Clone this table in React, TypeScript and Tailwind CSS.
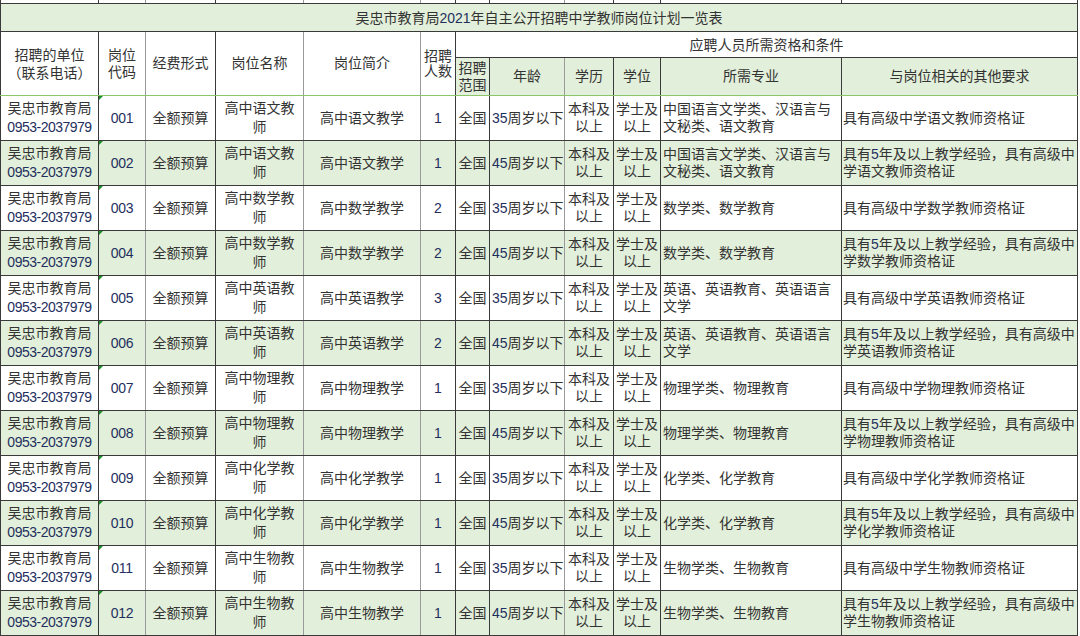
import React from 'react';

const D = 'd';
const G = 'g';
// boundary colours for 13 vertical lines (12 columns)
const bounds = [D, D, G, D, G, G, D, D, G, D, D, D, D];
const widths = [98, 47, 70, 88, 117, 35, 34, 75, 49, 47, 181, 236];

const leftCls = (c: string) => (c === D ? 'border-l-[#3a3a3a]' : 'border-l-[#9a9a9a]');
const rightCls = (c: string) => (c === D ? 'border-r-[#3a3a3a]' : 'border-r-[#9a9a9a]');

type CellProps = {
  col: number;
  span?: number;
  rowSpan?: number;
  top?: string;
  bottom?: string;
  className?: string;
  children?: React.ReactNode;
};

function Cell({ col, span = 1, rowSpan, top = 'border-t-[#3a3a3a]', bottom = 'border-b-[#3a3a3a]', className = '', children }: CellProps) {
  return (
    <td
      colSpan={span}
      rowSpan={rowSpan}
      className={[
        'border border-solid p-0 align-middle',
        leftCls(bounds[col]),
        rightCls(bounds[col + span]),
        top,
        bottom,
        className,
      ].join(' ')}
    >
      {children}
    </td>
  );
}

const N = ({ children }: { children: React.ReactNode }) => <span className="text-[#1f2f5e]">{children}</span>;

const subjects = [
  { s: '语文', major: ['中国语言文学类、汉语言与', '文秘类、语文教育'] },
  { s: '数学', major: ['数学类、数学教育'] },
  { s: '英语', major: ['英语、英语教育、英语语言', '文学'] },
  { s: '物理', major: ['物理学类、物理教育'] },
  { s: '化学', major: ['化学类、化学教育'] },
  { s: '生物', major: ['生物学类、生物教育'] },
];
const nums = ['1', '1', '2', '2', '3', '2', '1', '1', '1', '1', '1', '1'];

const rows = nums.map((num, i) => {
  const sub = subjects[Math.floor(i / 2)];
  const green = i % 2 === 1;
  return {
    code: String(i + 1).padStart(3, '0'),
    sub: sub.s,
    major: sub.major,
    num,
    green,
  };
});

export default function App() {
  return (
    <div className="w-[1080px] h-[636px] overflow-hidden bg-white text-[14px] text-[#333333] font-['Liberation_Sans','Noto_Sans_CJK_SC',sans-serif]">
      <table className="table-fixed border-collapse w-[1077px]">
        <colgroup>
          {widths.map((w, i) => (
            <col key={i} style={{ width: w }} />
          ))}
        </colgroup>
        <tbody>
          {/* sliver of the row above */}
          <tr className="h-[3px]">
            {widths.map((_, i) => (
              <Cell key={i} col={i} top="border-t-transparent" className="h-[3px] leading-[0px]" />
            ))}
          </tr>
          {/* title */}
          <tr>
            <Cell col={0} span={12} className="h-[28px] bg-[#e2efda] text-center leading-[20px]">
              吴忠市教育局<N>2021</N>年自主公开招聘中学教师岗位计划一览表
            </Cell>
          </tr>
          {/* header row A */}
          <tr>
            <Cell col={0} rowSpan={2} bottom="border-b-[#8cc46a]" className="text-center leading-[18px]">
              招聘的单位
              <br />
              （联系电话）
            </Cell>
            <Cell col={1} rowSpan={2} bottom="border-b-[#8cc46a]" className="text-center leading-[17px]">
              岗位
              <br />
              代码
            </Cell>
            <Cell col={2} rowSpan={2} bottom="border-b-[#8cc46a]" className="text-center">
              经费形式
            </Cell>
            <Cell col={3} rowSpan={2} bottom="border-b-[#8cc46a]" className="text-center">
              岗位名称
            </Cell>
            <Cell col={4} rowSpan={2} bottom="border-b-[#8cc46a]" className="text-center">
              岗位简介
            </Cell>
            <Cell col={5} rowSpan={2} bottom="border-b-[#8cc46a]" className="text-center leading-[15px]">
              招聘
              <br />
              人数
            </Cell>
            <Cell col={6} span={6} className="h-[26px] text-center leading-[18px]">
              应聘人员所需资格和条件
            </Cell>
          </tr>
          {/* header row B */}
          <tr>
            <Cell col={6} bottom="border-b-[#8cc46a]" className="h-[38px] bg-[#e2efda] text-center leading-[17px]">
              招聘
              <br />
              范围
            </Cell>
            <Cell col={7} bottom="border-b-[#8cc46a]" className="bg-[#e2efda] text-center">
              年龄
            </Cell>
            <Cell col={8} bottom="border-b-[#8cc46a]" className="bg-[#e2efda] text-center">
              学历
            </Cell>
            <Cell col={9} bottom="border-b-[#8cc46a]" className="bg-[#e2efda] text-center">
              学位
            </Cell>
            <Cell col={10} bottom="border-b-[#8cc46a]" className="bg-[#e2efda] text-center">
              所需专业
            </Cell>
            <Cell col={11} bottom="border-b-[#8cc46a]" className="bg-[#e2efda] text-center">
              与岗位相关的其他要求
            </Cell>
          </tr>
          {rows.map((r, i) => {
            const bg = r.green ? 'bg-[#e2efda]' : 'bg-white';
            const top = i === 0 ? 'border-t-[#8cc46a]' : 'border-t-[#3a3a3a]';
            return (
              <tr key={r.code} className={bg}>
                <Cell col={0} top={top} className="h-[45px] text-center leading-[19px] whitespace-nowrap">
                  吴忠市教育局
                  <br />
                  <span className="text-[14px] tracking-[-0.5px] text-[#1f2f5e]">0953-2037979</span>
                </Cell>
                <Cell col={1} top={top} className="relative text-center text-[14px] tracking-[-0.3px]">
                  <span className="absolute left-0 top-0 w-0 h-0 border-solid border-t-[4px] border-r-[4px] border-t-[#1f8f2a] border-r-transparent" />
                  <N>{r.code}</N>
                </Cell>
                <Cell col={2} top={top} className="text-center">
                  全额预算
                </Cell>
                <Cell col={3} top={top} className="text-center leading-[19px] whitespace-nowrap">
                  高中{r.sub}教
                  <br />
                  师
                </Cell>
                <Cell col={4} top={top} className="text-center whitespace-nowrap">
                  高中{r.sub}教学
                </Cell>
                <Cell col={5} top={top} className="text-center">
                  <N>{r.num}</N>
                </Cell>
                <Cell col={6} top={top} className="text-center">
                  全国
                </Cell>
                <Cell col={7} top={top} className="pl-[2px] text-left whitespace-nowrap">
                  <N>{r.green ? '45' : '35'}</N>周岁以下
                </Cell>
                <Cell col={8} top={top} className="text-center leading-[17px]">
                  本科及
                  <br />
                  以上
                </Cell>
                <Cell col={9} top={top} className="text-center leading-[17px]">
                  学士及
                  <br />
                  以上
                </Cell>
                <Cell col={10} top={top} className="pl-[2px] text-left leading-[17px] whitespace-nowrap">
                  {r.major.map((m, k) => (
                    <React.Fragment key={k}>
                      {k > 0 && <br />}
                      {m}
                    </React.Fragment>
                  ))}
                </Cell>
                <Cell col={11} top={top} className="pl-[1px] text-left leading-[17px] whitespace-nowrap">
                  {r.green ? (
                    <>
                      具有<N>5</N>年及以上教学经验，具有高级中
                      <br />学{r.sub}教师资格证
                    </>
                  ) : (
                    <>具有高级中学{r.sub}教师资格证</>
                  )}
                </Cell>
              </tr>
            );
          })}
        </tbody>
      </table>
    </div>
  );
}
